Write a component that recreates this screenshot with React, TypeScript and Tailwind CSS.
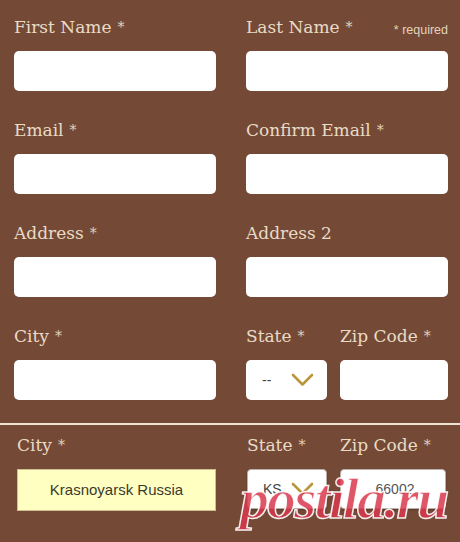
import React from 'react';

const labelCls = 'block h-[24px] leading-[24px] text-[17px] text-[#eadbc6] font-["DejaVu_Serif",serif] whitespace-nowrap';
const inputCls = 'block h-[40px] w-full rounded-[5px] bg-white border-0 outline-none';

function Label({ text, required = true }: { text: string; required?: boolean }) {
  return (
    <span className={labelCls}>
      {text}
      {required && <span className="ml-[6px] text-[14px] align-top text-[#e2d2bd]">*</span>}
    </span>
  );
}

function Chevron() {
  return (
    <svg width="23" height="14" viewBox="0 0 23 14" fill="none">
      <path d="M2 2 L11.5 11.5 L21 2" stroke="#b8973b" strokeWidth="2.6" strokeLinecap="round" strokeLinejoin="round" />
    </svg>
  );
}

function Field({ label, required = true, extra }: { label: string; required?: boolean; extra?: React.ReactNode }) {
  return (
    <div>
      <div className="flex h-[24px] justify-between items-start">
        <Label text={label} required={required} />
        {extra}
      </div>
      <div className="mt-[12px]">
        <input className={inputCls} />
      </div>
    </div>
  );
}

export default function App() {
  return (
    <div className="relative w-full min-h-[542px] bg-[#744a36] overflow-hidden">
      <div className="px-[14px] pt-[15px]">
        <div className="grid grid-cols-[202px_202px] gap-x-[30px] gap-y-[27px]">
          <Field label="First Name" />
          <Field
            label="Last Name"
            extra={
              <span className="mt-[7px] leading-[16px] text-[12.5px] text-[#e2d2bd] font-['Liberation_Sans',sans-serif]">
                * required
              </span>
            }
          />
          <Field label="Email" />
          <Field label="Confirm Email" />
          <Field label="Address" />
          <Field label="Address 2" required={false} />
          <Field label="City" />
          <div className="flex gap-[13px]">
            <div className="w-[81px]">
              <Label text="State" />
              <div className="mt-[12px] h-[40px] rounded-[5px] bg-white flex items-center justify-between pl-[16px] pr-[13px]">
                <span className="text-[14px] text-[#444] font-['Liberation_Sans',sans-serif]">--</span>
                <Chevron />
              </div>
            </div>
            <div className="w-[108px]">
              <Label text="Zip Code" />
              <div className="mt-[12px]">
                <input className={inputCls} />
              </div>
            </div>
          </div>
        </div>
      </div>

      <div className="mt-[23px] h-[2px] bg-[#efe3d3]" />

      <div className="pl-[17px] pt-[8px] flex">
        <div className="w-[199px]">
          <Label text="City" />
          <div className="mt-[12px] h-[42px] bg-[#ffffc2] border border-[#cdbf93] flex items-center justify-center text-[15px] text-[#3b3a2c] font-['Liberation_Sans',sans-serif]">
            Krasnoyarsk Russia
          </div>
        </div>
        <div className="ml-[31px] w-[80px]">
          <Label text="State" />
          <div className="mt-[12px] h-[40px] rounded-[4px] bg-white border border-[#b9b0aa] shadow-[0_1px_2px_rgba(0,0,0,0.25)] flex items-center justify-between pl-[15px] pr-[12px]">
            <span className="text-[14px] text-[#444] font-['Liberation_Sans',sans-serif]">KS</span>
            <Chevron />
          </div>
        </div>
        <div className="ml-[13px] w-[106px]">
          <Label text="Zip Code" />
          <div className="mt-[12px] h-[40px] rounded-[4px] bg-white border border-[#b9b0aa] shadow-[0_1px_2px_rgba(0,0,0,0.25)] flex items-center justify-center pl-[4px] text-[14px] text-[#555] font-['Liberation_Sans',sans-serif]">
            66002
          </div>
        </div>
      </div>

      <div
        className="absolute left-[240px] top-[470px] text-[58px] leading-none font-bold italic tracking-[-2px] text-[#d8384c]/85 font-['Liberation_Serif',serif] pointer-events-none"
        style={{ WebkitTextStroke: '1.5px rgba(255,255,255,0.9)' }}
      >
        postila.ru
      </div>
    </div>
  );
}
